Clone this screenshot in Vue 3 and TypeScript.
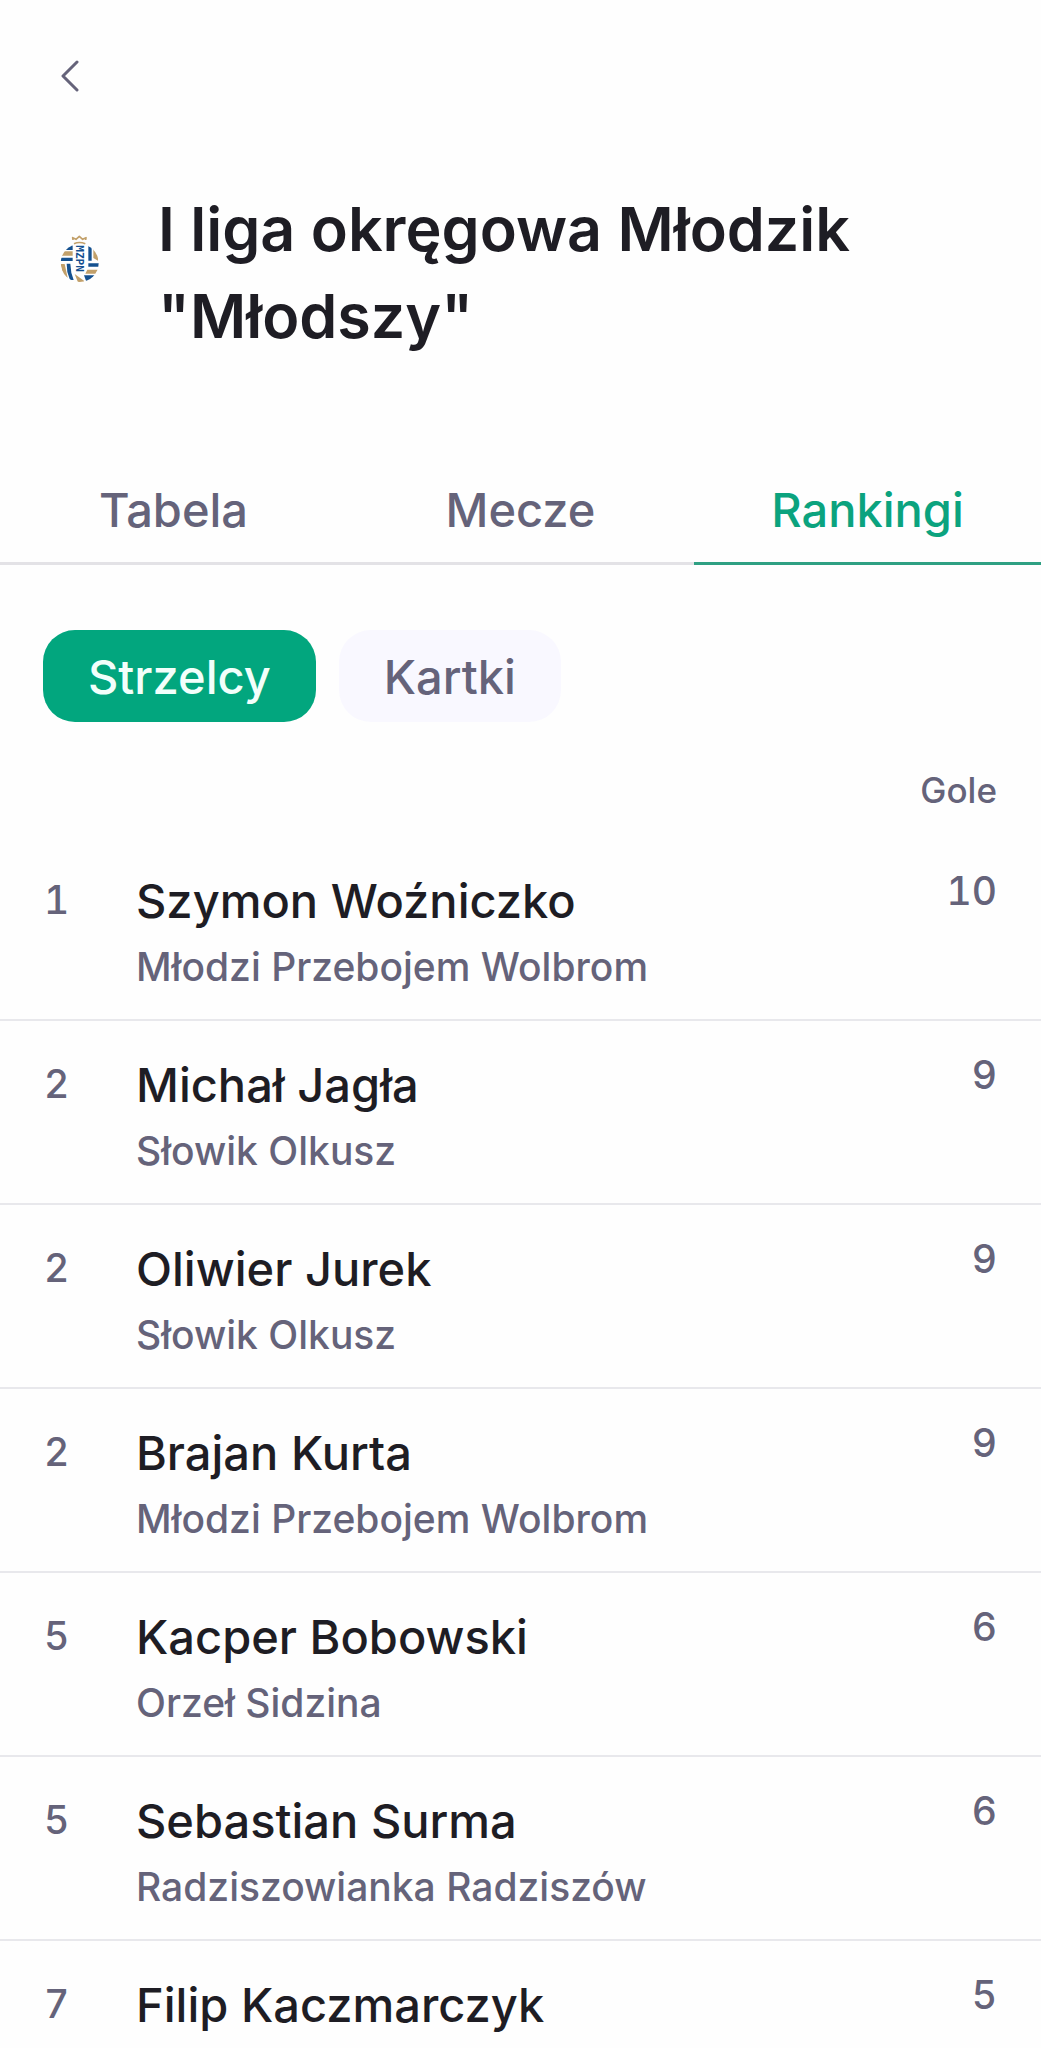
<script setup lang="ts">
import { ref } from 'vue'

interface Scorer {
  rank: number
  name: string
  team?: string
  goals: number
}

const tabs: string[] = ['Tabela', 'Mecze', 'Rankingi']
const filters: string[] = ['Strzelcy', 'Kartki']
const activeTab = ref('Rankingi')
const activeFilter = ref('Strzelcy')

const scorers: Scorer[] = [
  { rank: 1, name: 'Szymon Woźniczko', team: 'Młodzi Przebojem Wolbrom', goals: 10 },
  { rank: 2, name: 'Michał Jagła', team: 'Słowik Olkusz', goals: 9 },
  { rank: 2, name: 'Oliwier Jurek', team: 'Słowik Olkusz', goals: 9 },
  { rank: 2, name: 'Brajan Kurta', team: 'Młodzi Przebojem Wolbrom', goals: 9 },
  { rank: 5, name: 'Kacper Bobowski', team: 'Orzeł Sidzina', goals: 6 },
  { rank: 5, name: 'Sebastian Surma', team: 'Radziszowianka Radziszów', goals: 6 },
  { rank: 7, name: 'Filip Kaczmarczyk', goals: 5 },
]
</script>

<template>
  <div class="page">
    <header class="top">
      <button class="back" type="button" aria-label="Wstecz">
        <svg width="20" height="32" viewBox="0 0 20 32" aria-hidden="true">
          <path d="M17 2 L3 16 L17 30" />
        </svg>
      </button>
      <div class="heading">
        <svg class="crest" width="40" height="50" viewBox="60 40 120 150" aria-hidden="true">
          <defs>
            <clipPath id="ball"><circle cx="119" cy="127" r="57" /></clipPath>
          </defs>
          <g fill="none" stroke="#c2a06a" stroke-linejoin="round">
            <path d="M99 58 L98 51 L108 56 L118 47 L128 56 L138 51 L137 58" stroke-width="5" />
            <path d="M102 69 Q118 62 136 69" stroke-width="5" />
          </g>
          <g clip-path="url(#ball)">
            <path fill="#c2a06a" d="M68 92 H98 V105 H62 Z M160 76 H174 V120 L160 112 Z M62 130 H74 L84 176 H72 Z M142 147 H176 L168 159 H136 Z M104 160 L132 180 V190 H116 Z" />
            <path fill="#14508f" d="M84 74 H98 V88 H78 Z M60 111 H98 V121 H60 Z M145 72 H155 V120 H145 Z M145 128 H178 V138 H145 Z M80 129 H91 L94 156 L101 178 H90 L82 154 Z M132 164 H168 L148 186 H140 Z" />
          </g>
          <rect x="103" y="74" width="34" height="80" fill="#fff" />
          <text class="crest-text" transform="translate(107 74) rotate(90)">MZPN</text>
        </svg>
        <h1>I liga okręgowa Młodzik "Młodszy"</h1>
      </div>
    </header>

    <nav class="tabs">
      <a
        v-for="tab in tabs"
        :key="tab"
        href="#"
        class="tab"
        :class="{ active: tab === activeTab }"
        @click.prevent="activeTab = tab"
      >{{ tab }}</a>
    </nav>

    <main>
      <div class="filters">
        <button
          v-for="filter in filters"
          :key="filter"
          type="button"
          class="pill"
          :class="{ active: filter === activeFilter }"
          @click="activeFilter = filter"
        >{{ filter }}</button>
      </div>

      <table class="ranking">
        <thead>
          <tr>
            <th class="rank"></th>
            <th></th>
            <th class="goals" scope="col">Gole</th>
          </tr>
        </thead>
        <tbody>
          <tr v-for="scorer in scorers" :key="scorer.name">
            <td class="rank">{{ scorer.rank }}</td>
            <td class="player">
              <div class="name">{{ scorer.name }}</div>
              <div v-if="scorer.team" class="team">{{ scorer.team }}</div>
            </td>
            <td class="goals">{{ scorer.goals }}</td>
          </tr>
        </tbody>
      </table>
    </main>
  </div>
</template>

<style>
body {
  margin: 0;
  background: #fefefe;
}
</style>

<style scoped>
.page {
  font-family: Inter, 'Liberation Sans', sans-serif;
  font-weight: 500;
  color: #1e1d24;
}

button {
  border: 0;
  margin: 0;
  font: inherit;
  cursor: pointer;
}

.top {
  padding: 60px 60px 0;
}

.back {
  display: flex;
  padding: 0;
  background: none;
}

.back path {
  fill: none;
  stroke: #65637a;
  stroke-width: 3;
  stroke-linecap: round;
  stroke-linejoin: round;
}

.heading {
  display: flex;
  align-items: flex-start;
  gap: 58px;
  margin-top: 94px;
}

.crest {
  flex: none;
  margin-top: 48px;
}

.crest-text {
  font-family: 'DejaVu Sans Mono', monospace;
  font-size: 33px;
  font-weight: 700;
  fill: #14508f;
}

h1 {
  margin: 0;
  font-size: 61px;
  line-height: 87px;
  font-weight: 600;
}

.tabs {
  display: flex;
  margin-top: 104px;
}

.tab {
  flex: 1;
  padding: 14px 0 20px;
  border-bottom: 3px solid #e3e2e6;
  font-size: 47px;
  line-height: 64px;
  text-align: center;
  text-decoration: none;
  color: #65637a;
}

.tab.active {
  border-color: #2fa083;
  color: #0ba37e;
}

.filters {
  display: flex;
  gap: 23px;
  padding: 65px 43px 0;
}

.pill {
  padding: 15px 45px 13px;
  border-radius: 32px;
  font-size: 47px;
  line-height: 64px;
  background: #f9f8ff;
  color: #65637a;
}

.pill.active {
  background: #02a67e;
  color: #f2fffb;
}

.ranking {
  width: 100%;
  margin-top: 44px;
  border-spacing: 0;
  font-size: 39px;
  line-height: 56px;
  font-variant-numeric: tabular-nums;
  color: #65637a;
}

th,
td {
  padding: 0;
  vertical-align: top;
  text-align: left;
}

th {
  height: 71px;
  font-size: 35px;
  line-height: 48px;
  font-weight: 500;
}

td {
  border-bottom: 2px solid #e8e8ec;
}

.rank {
  width: 92px;
  padding-left: 44px;
}

td.rank {
  padding-top: 35px;
}

.player {
  padding-top: 32px;
  padding-bottom: 24px;
}

.name {
  font-size: 47px;
  line-height: 64px;
  color: #1e1d24;
}

.team {
  margin-top: 6px;
}

.goals {
  padding-right: 44px;
  text-align: right;
}

td.goals {
  padding-top: 26px;
}

tr:last-child td {
  padding-bottom: 0;
  border-bottom: 0;
}
</style>
